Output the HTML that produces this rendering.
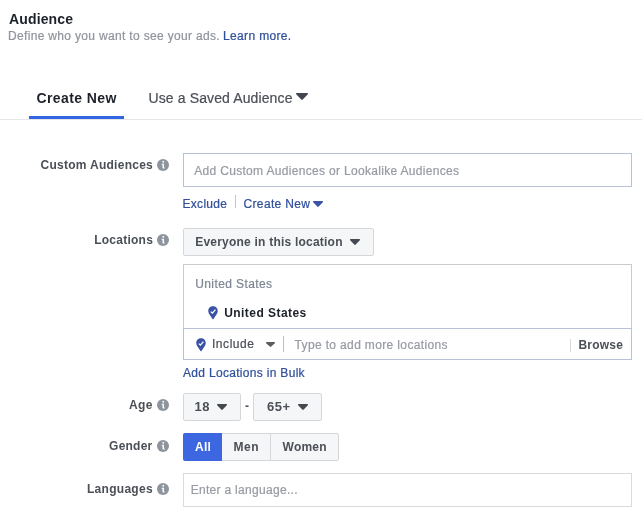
<!DOCTYPE html>
<html><head><meta charset="utf-8"><title>Audience</title>
<style>
*{box-sizing:border-box;margin:0;padding:0}
html,body{width:642px;height:520px;background:#fff;overflow:hidden}
body{font-family:"Liberation Sans",sans-serif;position:relative}
.a{position:absolute;display:block}
.t{position:absolute;white-space:nowrap;line-height:16px}
.n{-webkit-text-stroke:0.22px currentColor}
</style></head><body>
<div class="a" style="left:0;top:0;width:642px;height:520px;will-change:transform">

<div class="a" style="left:0;top:119px;width:642px;height:1px;background:#e4e6e9"></div>
<div class="a" style="left:29px;top:116px;width:95px;height:3px;background:#3265e3"></div>
<div class="a" style="left:183px;top:153px;width:449px;height:34px;border:1px solid #b7c2d8;background:#fff"></div>
<div class="a" style="left:235px;top:195px;width:1px;height:13px;background:#bac4da"></div>
<div class="a" style="left:183px;top:228px;width:191px;height:28px;border:1px solid #d5d7db;border-radius:2px;background:#f5f6f7"></div>
<div class="a" style="left:183px;top:264px;width:449px;height:65px;border:1px solid #c9cbcf;border-bottom:none;background:#fff"></div>
<div class="a" style="left:183px;top:328px;width:449px;height:32px;border:1px solid #b7c2d8;background:#fff"></div>
<div class="a" style="left:283px;top:336px;width:1px;height:16px;background:#b4bfd6"></div>
<div class="a" style="left:570px;top:339px;width:1px;height:13px;background:#d6d8dc"></div>
<div class="a" style="left:183px;top:393px;width:58px;height:28px;border:1px solid #d5d7db;border-radius:2px;background:#f5f6f7"></div>
<div class="a" style="left:253px;top:393px;width:69px;height:28px;border:1px solid #d5d7db;border-radius:2px;background:#f5f6f7"></div>
<div class="a" style="left:183px;top:433px;width:156px;height:28px;border:1px solid #d5d7db;border-radius:2px;background:#f5f6f7"></div>
<div class="a" style="left:183px;top:433px;width:39px;height:28px;border-radius:2px 0 0 2px;background:#3d66e1"></div>
<div class="a" style="left:270px;top:434px;width:1px;height:26px;background:#d5d7db"></div>
<div class="a" style="left:183px;top:473px;width:449px;height:34px;border:1px solid #d8dade;background:#fff"></div>
<svg class="a" style="left:296px;top:93px" width="12" height="7" viewBox="0 0 12 7"><path d="M0 0.6Q0 0 0.6 0H11.4Q12 0 12 0.6Q12 1 11.6 1.4L6.7 6.6Q6.0 7.2 5.3 6.6L0.4 1.4Q0 1 0 0.6Z" fill="#42464e"/></svg>
<svg class="a" style="left:313px;top:201px" width="10" height="6" viewBox="0 0 10 6"><path d="M0 0.6Q0 0 0.6 0H9.4Q10 0 10 0.6Q10 1 9.6 1.4L5.7 5.6Q5.0 6.2 4.3 5.6L0.4 1.4Q0 1 0 0.6Z" fill="#3b55a5"/></svg>
<svg class="a" style="left:350px;top:239px" width="10" height="6" viewBox="0 0 10 6"><path d="M0 0.6Q0 0 0.6 0H9.4Q10 0 10 0.6Q10 1 9.6 1.4L5.7 5.6Q5.0 6.2 4.3 5.6L0.4 1.4Q0 1 0 0.6Z" fill="#44484f"/></svg>
<svg class="a" style="left:266px;top:342px" width="9" height="5" viewBox="0 0 9 5"><path d="M0 0.6Q0 0 0.6 0H8.4Q9 0 9 0.6Q9 1 8.6 1.4L5.2 4.6Q4.5 5.2 3.8 4.6L0.4 1.4Q0 1 0 0.6Z" fill="#5a5d63"/></svg>
<svg class="a" style="left:217px;top:404px" width="10" height="6" viewBox="0 0 10 6"><path d="M0 0.6Q0 0 0.6 0H9.4Q10 0 10 0.6Q10 1 9.6 1.4L5.7 5.6Q5.0 6.2 4.3 5.6L0.4 1.4Q0 1 0 0.6Z" fill="#44484f"/></svg>
<svg class="a" style="left:298px;top:404px" width="10" height="6" viewBox="0 0 10 6"><path d="M0 0.6Q0 0 0.6 0H9.4Q10 0 10 0.6Q10 1 9.6 1.4L5.7 5.6Q5.0 6.2 4.3 5.6L0.4 1.4Q0 1 0 0.6Z" fill="#44484f"/></svg>
<svg class="a" style="left:157px;top:159px" width="12" height="12" viewBox="0 0 12 12"><circle cx="6" cy="6" r="6" fill="#8d949e"/><rect x="5.5" y="1.9" width="1.6" height="1.7" fill="#fff"/><path d="M4.7 4.8H7V8.3Q7 8.7 7.7 8.7V9.6H6.3Q5.5 9.6 5.5 8.8V5.8H4.7Z" fill="#fff"/></svg>
<svg class="a" style="left:157px;top:234px" width="12" height="12" viewBox="0 0 12 12"><circle cx="6" cy="6" r="6" fill="#8d949e"/><rect x="5.5" y="1.9" width="1.6" height="1.7" fill="#fff"/><path d="M4.7 4.8H7V8.3Q7 8.7 7.7 8.7V9.6H6.3Q5.5 9.6 5.5 8.8V5.8H4.7Z" fill="#fff"/></svg>
<svg class="a" style="left:157px;top:399px" width="12" height="12" viewBox="0 0 12 12"><circle cx="6" cy="6" r="6" fill="#8d949e"/><rect x="5.5" y="1.9" width="1.6" height="1.7" fill="#fff"/><path d="M4.7 4.8H7V8.3Q7 8.7 7.7 8.7V9.6H6.3Q5.5 9.6 5.5 8.8V5.8H4.7Z" fill="#fff"/></svg>
<svg class="a" style="left:157px;top:440px" width="12" height="12" viewBox="0 0 12 12"><circle cx="6" cy="6" r="6" fill="#8d949e"/><rect x="5.5" y="1.9" width="1.6" height="1.7" fill="#fff"/><path d="M4.7 4.8H7V8.3Q7 8.7 7.7 8.7V9.6H6.3Q5.5 9.6 5.5 8.8V5.8H4.7Z" fill="#fff"/></svg>
<svg class="a" style="left:157px;top:483px" width="12" height="12" viewBox="0 0 12 12"><circle cx="6" cy="6" r="6" fill="#8d949e"/><rect x="5.5" y="1.9" width="1.6" height="1.7" fill="#fff"/><path d="M4.7 4.8H7V8.3Q7 8.7 7.7 8.7V9.6H6.3Q5.5 9.6 5.5 8.8V5.8H4.7Z" fill="#fff"/></svg>
<svg class="a" style="left:208px;top:306.3px" width="10" height="14" viewBox="0 0 10 14"><path d="M5 0.2C7.7 0.2 9.75 2.25 9.75 4.9C9.75 7.5 7.4 9.9 5.5 12.9Q5 13.6 4.5 12.9C2.6 9.9 0.25 7.5 0.25 4.9C0.25 2.25 2.3 0.2 5 0.2Z" fill="#3b51a3"/><path d="M2.8 5.6L4.4 7.1L7.4 3.6" stroke="#fff" stroke-width="1.3" fill="none"/></svg>
<svg class="a" style="left:196px;top:338.3px" width="10" height="14" viewBox="0 0 10 14"><path d="M5 0.2C7.7 0.2 9.75 2.25 9.75 4.9C9.75 7.5 7.4 9.9 5.5 12.9Q5 13.6 4.5 12.9C2.6 9.9 0.25 7.5 0.25 4.9C0.25 2.25 2.3 0.2 5 0.2Z" fill="#3b51a3"/><path d="M2.8 5.6L4.4 7.1L7.4 3.6" stroke="#fff" stroke-width="1.3" fill="none"/></svg>
<div class="t" id="h1" style="left:9px;top:11px;font-size:14px;font-weight:bold;letter-spacing:0.14px;color:#1d2129">Audience</div>
<div class="t n" id="sub1" style="left:8px;top:28px;font-size:12px;font-weight:normal;letter-spacing:0.33px;color:#90949c">Define who you want to see your ads.</div>
<a class="t n" id="sub2" style="left:223px;top:28px;font-size:12px;font-weight:normal;letter-spacing:0.35px;color:#304f9b">Learn more.</a>
<div class="t" id="tab1" style="left:36.5px;top:90px;font-size:14px;font-weight:bold;letter-spacing:0.4px;color:#1d2129">Create New</div>
<div class="t n" id="tab2" style="left:148.5px;top:90px;font-size:14px;font-weight:normal;letter-spacing:0.12px;color:#4b4f56">Use a Saved Audience</div>
<div class="t" id="l1" style="left:40.5px;top:157px;font-size:12px;font-weight:bold;letter-spacing:0.27px;color:#4b4f56">Custom Audiences</div>
<div class="t n" id="ph1" style="left:194.2px;top:163px;font-size:12px;font-weight:normal;letter-spacing:0.32px;color:#979ba3">Add Custom Audiences or Lookalike Audiences</div>
<a class="t n" id="ex" style="left:182.5px;top:196px;font-size:12px;font-weight:normal;letter-spacing:0.3px;color:#304f9b">Exclude</a>
<a class="t n" id="cn" style="left:243.5px;top:196px;font-size:12px;font-weight:normal;letter-spacing:0.35px;color:#304f9b">Create New</a>
<div class="t" id="l2" style="left:94.2px;top:232px;font-size:12px;font-weight:bold;letter-spacing:0.25px;color:#4b4f56">Locations</div>
<div class="t" id="ev" style="left:195.2px;top:234px;font-size:12px;font-weight:bold;letter-spacing:0.22px;color:#4b4f56">Everyone in this location</div>
<div class="t n" id="us1" style="left:195.2px;top:276px;font-size:12px;font-weight:normal;letter-spacing:0.4px;color:#7f8792">United States</div>
<div class="t" id="us2" style="left:224.2px;top:305px;font-size:12px;font-weight:bold;letter-spacing:0.45px;color:#1d2129">United States</div>
<div class="t n" id="inc" style="left:212px;top:336px;font-size:12px;font-weight:normal;letter-spacing:0.54px;color:#4b4f56">Include</div>
<div class="t n" id="ph2" style="left:294.5px;top:337px;font-size:12px;font-weight:normal;letter-spacing:0.36px;color:#979ba3">Type to add more locations</div>
<div class="t" id="br" style="left:578.5px;top:337px;font-size:12px;font-weight:bold;letter-spacing:0.2px;color:#4b4f56">Browse</div>
<a class="t n" id="bulk" style="left:183px;top:365px;font-size:12px;font-weight:normal;letter-spacing:0.31px;color:#304f9b">Add Locations in Bulk</a>
<div class="t" id="l3" style="left:128.9px;top:397px;font-size:12px;font-weight:bold;letter-spacing:0.4px;color:#4b4f56">Age</div>
<div class="t" id="a18" style="left:194.6px;top:399px;font-size:13px;font-weight:bold;letter-spacing:0.5px;color:#4b4f56">18</div>
<div class="t" id="dash" style="left:245px;top:398px;font-size:12px;font-weight:bold;letter-spacing:0px;color:#4b4f56">-</div>
<div class="t" id="a65" style="left:267px;top:399px;font-size:13px;font-weight:bold;letter-spacing:0.55px;color:#4b4f56">65+</div>
<div class="t" id="l4" style="left:109.1px;top:438px;font-size:12px;font-weight:bold;letter-spacing:0.22px;color:#4b4f56">Gender</div>
<div class="t" id="all" style="left:195.1px;top:439px;font-size:12px;font-weight:bold;letter-spacing:0.2px;color:#ffffff">All</div>
<div class="t" id="men" style="left:233.5px;top:439px;font-size:12px;font-weight:bold;letter-spacing:0.6px;color:#4b4f56">Men</div>
<div class="t" id="wom" style="left:282.6px;top:439px;font-size:12px;font-weight:bold;letter-spacing:0.22px;color:#4b4f56">Women</div>
<div class="t" id="l5" style="left:87px;top:481px;font-size:12px;font-weight:bold;letter-spacing:0.28px;color:#4b4f56">Languages</div>
<div class="t n" id="ph3" style="left:190.7px;top:482px;font-size:12px;font-weight:normal;letter-spacing:0.3px;color:#979ba3">Enter a language...</div>
</div></body></html>
